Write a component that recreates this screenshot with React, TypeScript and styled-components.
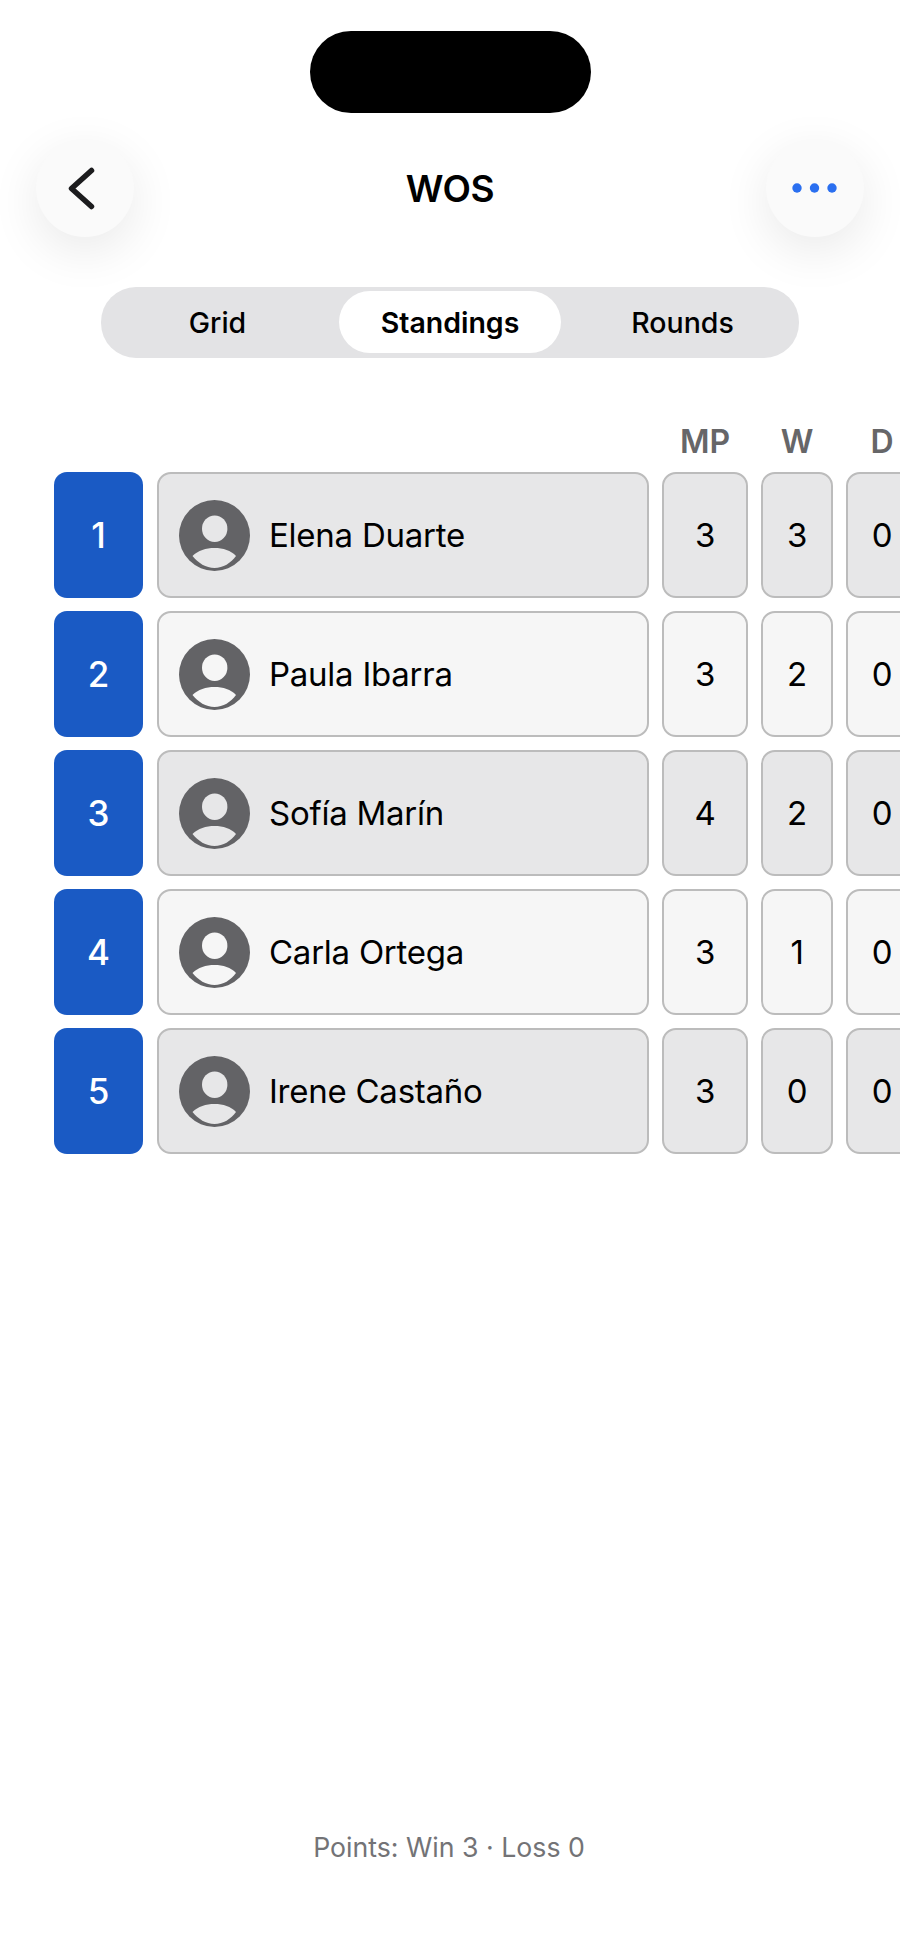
import React from 'react';
import styled, { createGlobalStyle } from 'styled-components';

const GlobalStyle = createGlobalStyle`
  html, body {
    margin: 0;
    padding: 0;
    background: #fff;
  }
`;

const Screen = styled.div`
  width: 900px;
  height: 1957px;
  overflow: hidden;
  display: flex;
  flex-direction: column;
  background: #fff;
  color: #000;
  font-family: Inter, "Liberation Sans", sans-serif;
`;

const Island = styled.div`
  width: 281px;
  height: 82px;
  margin: 31px auto 0;
  border-radius: 41px;
  background: #000;
`;

const NavBar = styled.div`
  display: flex;
  align-items: center;
  justify-content: space-between;
  margin-top: 26px;
  padding: 0 36px;
`;

const RoundButton = styled.div`
  width: 98px;
  height: 98px;
  border-radius: 50%;
  display: flex;
  align-items: center;
  justify-content: center;
  background: #fafafa;
  box-shadow: 0 14px 50px rgba(0, 0, 0, 0.09);
`;

const Title = styled.div`
  font-size: 37px;
  font-weight: 600;
  letter-spacing: -0.4px;
`;

const Segments = styled.div`
  display: grid;
  grid-template-columns: 233px 222px 233px;
  column-gap: 5px;
  box-sizing: border-box;
  width: 698px;
  height: 71px;
  margin: 50px auto 0;
  padding: 4px 0 5px;
  border-radius: 35px;
  background: #e3e3e5;
`;

const Segment = styled.div<{ $active?: boolean }>`
  display: flex;
  align-items: center;
  justify-content: center;
  border-radius: 31px;
  font-size: 28.5px;
  font-weight: ${p => (p.$active ? 600 : 450)};
  background: ${p => (p.$active ? '#fff' : 'transparent')};
`;

const Table = styled.div`
  display: flex;
  flex-direction: column;
  gap: 13px;
  margin-top: 65px;
  padding-left: 54px;
`;

const Row = styled.div`
  display: grid;
  grid-template-columns: 90px 492px 86px 72px 72px;
  column-gap: 13px;
  width: 900px;
`;

const HeadRow = styled(Row)`
  margin-bottom: -2px;
`;

const HeadCell = styled.div`
  text-align: center;
  font-size: 32px;
  line-height: 38px;
  font-weight: 600;
  color: #666668;
`;

const Rank = styled.div`
  width: 89px;
  height: 126px;
  display: flex;
  align-items: center;
  justify-content: center;
  border-radius: 13px;
  background: #1a5ac4;
  color: #fff;
  font-size: 35px;
  font-weight: 500;
`;

const Cell = styled.div<{ $shaded: boolean }>`
  box-sizing: border-box;
  height: 126px;
  display: flex;
  align-items: center;
  justify-content: center;
  border: 2px solid #bcbcbc;
  border-radius: 14px;
  background: ${p => (p.$shaded ? '#e7e7e8' : '#f6f6f6')};
  font-size: 33px;
  letter-spacing: -0.25px;
`;

const NameCell = styled(Cell)`
  justify-content: flex-start;
  gap: 19px;
  padding-left: 20px;
`;

const Footer = styled.div`
  margin-top: auto;
  margin-bottom: 93px;
  padding-right: 2px;
  text-align: center;
  font-size: 26.7px;
  line-height: 34px;
  color: #737376;
`;

const BackIcon = () => (
  <svg width="32" height="46" viewBox="0 0 32 46" fill="none" style={{ marginRight: 8 }}>
    <path d="M26.5 5.5 L6.5 23.5 L26.5 41.5" stroke="#1c1c1e" strokeWidth="5.5" strokeLinecap="round" strokeLinejoin="round" />
  </svg>
);

const MoreIcon = () => (
  <svg width="45" height="10" viewBox="0 0 45 10">
    <circle cx="5" cy="5" r="4.7" fill="#2a6ff0" />
    <circle cx="22.5" cy="5" r="4.7" fill="#2a6ff0" />
    <circle cx="40" cy="5" r="4.7" fill="#2a6ff0" />
  </svg>
);

const Avatar = ({ fill }: { fill: string }) => (
  <svg width="71" height="71" viewBox="0 0 71 71">
    <circle cx="35.5" cy="35.5" r="35.5" fill="#636366" />
    <ellipse cx="35.7" cy="28.7" rx="12.7" ry="13.3" fill={fill} />
    <path d="M13.5 56 C19 50.5 27 48 35.5 48 C44 48 52 50.5 57 56 C52 63 44 68 35.5 68 C27 68 19 63 13.5 56 Z" fill={fill} />
  </svg>
);

const players = [
  { name: 'Elena Duarte', mp: 3, w: 3, d: 0 },
  { name: 'Paula Ibarra', mp: 3, w: 2, d: 0 },
  { name: 'Sofía Marín', mp: 4, w: 2, d: 0 },
  { name: 'Carla Ortega', mp: 3, w: 1, d: 0 },
  { name: 'Irene Castaño', mp: 3, w: 0, d: 0 },
];

const App: React.FC = () => {
  return (
    <Screen>
      <GlobalStyle />
      <Island />
      <NavBar>
        <RoundButton>
          <BackIcon />
        </RoundButton>
        <Title>WOS</Title>
        <RoundButton>
          <MoreIcon />
        </RoundButton>
      </NavBar>
      <Segments>
        <Segment>Grid</Segment>
        <Segment $active>Standings</Segment>
        <Segment>Rounds</Segment>
      </Segments>
      <Table>
        <HeadRow>
          <HeadCell />
          <HeadCell />
          <HeadCell>MP</HeadCell>
          <HeadCell>W</HeadCell>
          <HeadCell>D</HeadCell>
        </HeadRow>
        {players.map((p, i) => {
          const shaded = i % 2 === 0;
          return (
            <Row key={p.name}>
              <Rank>{i + 1}</Rank>
              <NameCell $shaded={shaded}>
                <Avatar fill={shaded ? '#e7e7e8' : '#f6f6f6'} />
                {p.name}
              </NameCell>
              <Cell $shaded={shaded}>{p.mp}</Cell>
              <Cell $shaded={shaded}>{p.w}</Cell>
              <Cell $shaded={shaded}>{p.d}</Cell>
            </Row>
          );
        })}
      </Table>
      <Footer>Points: Win 3 · Loss 0</Footer>
    </Screen>
  );
};

export default App;
